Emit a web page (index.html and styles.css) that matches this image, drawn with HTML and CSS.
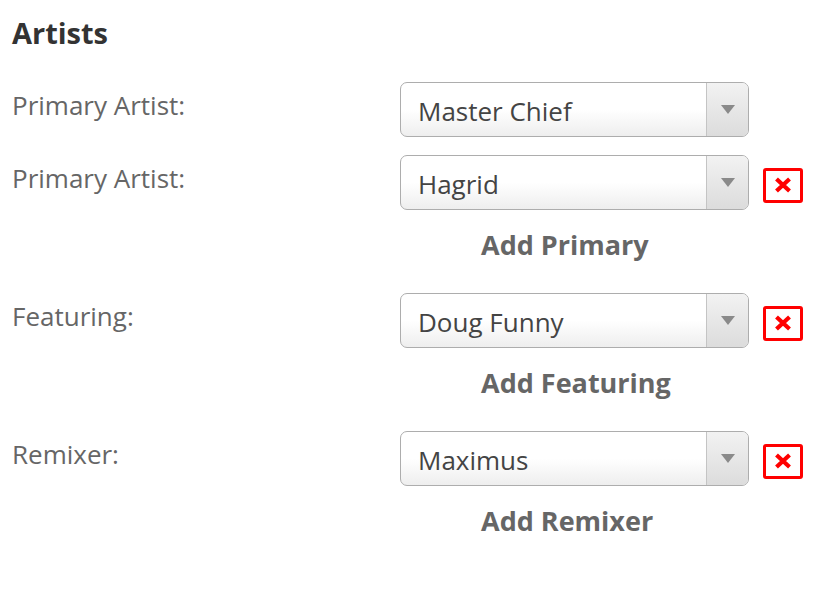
FILE: index.html
```html
<!DOCTYPE html>
<html>
<head>
<meta charset="utf-8">
<link rel="stylesheet" href="styles.css">
</head>
<body>
<div class="panel">
  <h2 class="title">Artists</h2>
  <div class="group">
    <div class="row">
      <div class="label">Primary Artist:</div>
      <div class="field">
        <div class="select"><span class="value">Master Chief</span><span class="arrow"><span class="tri"></span></span></div>
      </div>
    </div>
    <div class="row">
      <div class="label">Primary Artist:</div>
      <div class="field">
        <div class="select"><span class="value">Hagrid</span><span class="arrow"><span class="tri"></span></span></div>
        <div class="remove"><svg viewBox="0 0 18 16" width="18" height="16"><path d="M2.5 2L15.5 14M15.5 2L2.5 14" stroke="#f00" stroke-width="4.2" stroke-linecap="butt"/></svg></div>
      </div>
    </div>
    <div class="add">Add Primary</div>
  </div>
  <div class="group">
    <div class="row">
      <div class="label">Featuring:</div>
      <div class="field">
        <div class="select"><span class="value">Doug Funny</span><span class="arrow"><span class="tri"></span></span></div>
        <div class="remove"><svg viewBox="0 0 18 16" width="18" height="16"><path d="M2.5 2L15.5 14M15.5 2L2.5 14" stroke="#f00" stroke-width="4.2" stroke-linecap="butt"/></svg></div>
      </div>
    </div>
    <div class="add">Add Featuring</div>
  </div>
  <div class="group">
    <div class="row">
      <div class="label">Remixer:</div>
      <div class="field">
        <div class="select"><span class="value">Maximus</span><span class="arrow"><span class="tri"></span></span></div>
        <div class="remove"><svg viewBox="0 0 18 16" width="18" height="16"><path d="M2.5 2L15.5 14M15.5 2L2.5 14" stroke="#f00" stroke-width="4.2" stroke-linecap="butt"/></svg></div>
      </div>
    </div>
    <div class="add">Add Remixer</div>
  </div>
</div>
</body>
</html>
```
FILE: styles.css
```css
html, body {
  margin: 0;
  padding: 0;
  background: #fff;
}
body {
  font-family: "Open Sans", "Liberation Sans", sans-serif;
}
.panel {
  padding: 15px 12px 0 12px;
}
.title {
  margin: 0;
  font-size: 29px;
  line-height: 36px;
  font-weight: 700;
  color: #333;
}
.group {
  display: flex;
  flex-direction: column;
}
.group:first-of-type {
  margin-top: 31px;
}
.row {
  display: grid;
  grid-template-columns: 388px auto;
  margin-bottom: 18px;
}
.label {
  font-size: 26px;
  line-height: 34px;
  color: #666;
  padding-top: 6px;
}
.field {
  display: flex;
  align-items: center;
  gap: 14px;
}
.select {
  width: 349px;
  height: 55px;
  box-sizing: border-box;
  border: 1.5px solid #adadad;
  border-radius: 7px;
  background: linear-gradient(#fff 0%, #fff 50%, #eee 100%);
  display: flex;
  align-items: stretch;
  overflow: hidden;
}
.value {
  flex: 1;
  font-size: 26px;
  color: #444;
  padding-left: 17px;
  display: flex;
  align-items: center;
  padding-top: 2px;
}
.arrow {
  width: 41px;
  border-left: 1.5px solid #c4c4c4;
  background: linear-gradient(#f2f2f2, #dcdcdc);
  display: flex;
  align-items: center;
  justify-content: center;
}
.tri {
  width: 0;
  height: 0;
  border-left: 7.5px solid transparent;
  border-right: 7.5px solid transparent;
  border-top: 9px solid #8a8a8a;
}
.remove {
  width: 40px;
  height: 35px;
  box-sizing: border-box;
  border: 3px solid #f00;
  border-radius: 3px;
  display: flex;
  align-items: center;
  justify-content: center;
  margin-top: 5px;
}
.add {
  margin-left: 469px;
  margin-top: -1px;
  margin-bottom: 30px;
  font-size: 27px;
  line-height: 36px;
  font-weight: 700;
  color: #666;
}
```
